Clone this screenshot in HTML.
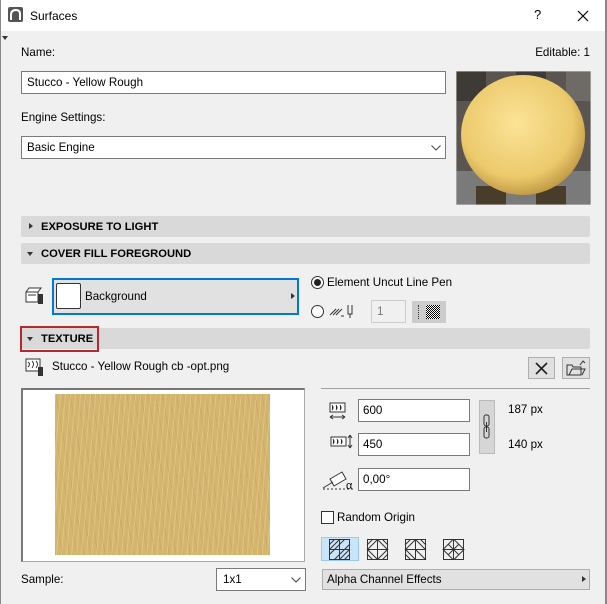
<!DOCTYPE html>
<html><head><meta charset="utf-8"><style>
*{box-sizing:border-box;margin:0;padding:0}
body{width:607px;height:604px;overflow:hidden;background:#f0f0f0;font-family:"Liberation Sans",sans-serif;font-size:11.6px;color:#000;position:relative}
.a{position:absolute}
.t{position:absolute;white-space:nowrap;line-height:14px}
.inp{position:absolute;background:#fff;border:1px solid #7a7a7a}
.bar{position:absolute;left:21px;width:569px;height:21px;background:#d9d9d9;border-radius:2px}
.bar span{position:absolute;left:20px;top:5px;font-weight:bold;font-size:11.2px}
.bar i{position:absolute;left:8px;top:7px;width:0;height:0}
.r{border-left:4px solid #333;border-top:3.5px solid transparent;border-bottom:3.5px solid transparent}
.d{border-top:4px solid #333;border-left:3.5px solid transparent;border-right:3.5px solid transparent;top:9px!important;left:6px!important}
</style></head><body>
<div class="a" style="left:0;top:0;width:607px;height:31px;background:#fff"></div>
<div class="a" style="left:0;top:0;width:1px;height:604px;background:#888"></div>
<div class="a" style="left:605px;top:0;width:2px;height:604px;background:#888"></div>
<svg class="a" style="left:8px;top:7px" width="15" height="15"><rect x="0" y="0" width="15" height="15" rx="2" fill="#555"/><path d="M3 13 V8 Q3 3 8 3 Q12 3 12 7 V13" stroke="#fff" stroke-width="2" fill="none"/></svg>
<div class="t" style="left:30px;top:9px;font-size:12px">Surfaces</div>
<div class="t" style="left:534px;top:8px;font-size:13px">?</div>
<svg class="a" style="left:577px;top:10px" width="12" height="12"><path d="M1 1L11 11M11 1L1 11" stroke="#000" stroke-width="1.2"/></svg>
<div class="a" style="left:2px;top:36px;border-top:4px solid #333;border-left:3px solid transparent;border-right:3px solid transparent"></div>

<div class="t" style="left:21px;top:46px">Name:</div>
<div class="t" style="right:17px;top:46px">Editable: 1</div>
<div class="inp" style="left:21px;top:71px;width:425px;height:23px"><div class="t" style="left:5px;top:4px">Stucco - Yellow Rough</div></div>
<div class="t" style="left:21px;top:111px">Engine Settings:</div>
<div class="inp" style="left:21px;top:136px;width:425px;height:23px"><div class="t" style="left:5px;top:4px">Basic Engine</div>
<svg class="a" style="left:409px;top:8px" width="10" height="6"><path d="M0.5 0.5L5 5L9.5 0.5" stroke="#444" fill="none"/></svg></div>
<svg class="a" style="left:456px;top:71px" width="135" height="134">
<defs><radialGradient id="g" cx="0.45" cy="0.4" r="0.6"><stop offset="0" stop-color="#fbe397"/><stop offset="0.75" stop-color="#ecca6c"/><stop offset="1" stop-color="#c49c48"/></radialGradient></defs>
<rect width="135" height="134" fill="#5a5550"/>
<rect x="0" y="0" width="30" height="30" fill="#3e3a35"/><rect x="60" y="0" width="30" height="30" fill="#3e3a35"/><rect x="110" y="0" width="25" height="30" fill="#6e6a66"/>
<rect x="0" y="100" width="135" height="34" fill="#7a7a7a"/>
<rect x="20" y="115" width="30" height="19" fill="#4a3c2a"/><rect x="80" y="115" width="30" height="19" fill="#4a3c2a"/>
<ellipse cx="67" cy="64" rx="62" ry="60" fill="url(#g)"/>
<rect x="0" y="0" width="135" height="134" fill="none" stroke="#ccc"/>
</svg>

<div class="bar" style="top:216px"><i class="r"></i><span>EXPOSURE TO LIGHT</span></div>
<div class="bar" style="top:243px"><i class="d"></i><span>COVER FILL FOREGROUND</span></div>

<svg class="a" style="left:25px;top:284px" width="20" height="22"><path d="M1 8h12v10H1z M1 8l3-4h12l-3 4 M3 11h8" stroke="#333" fill="#fff"/><rect x="13" y="10" width="5" height="10" fill="#333"/></svg>
<div class="a" style="left:52px;top:278px;width:247px;height:37px;background:#e1e1e1;border:2px solid #0078d7"></div>
<div class="a" style="left:56px;top:283px;width:25px;height:26px;background:#fff;border:1px solid #333;border-radius:2px"></div>
<div class="t" style="left:85px;top:290px">Background</div>
<div class="a" style="left:291px;top:293px;border-left:4px solid #333;border-top:3.5px solid transparent;border-bottom:3.5px solid transparent"></div>
<div class="a" style="left:311px;top:276px;width:13px;height:13px;border:1px solid #333;border-radius:50%;background:#fff"></div>
<div class="a" style="left:314px;top:279px;width:7px;height:7px;border-radius:50%;background:#222"></div>
<div class="t" style="left:327px;top:276px">Element Uncut Line Pen</div>
<div class="a" style="left:311px;top:305px;width:13px;height:13px;border:1px solid #333;border-radius:50%;background:#fff"></div>
<svg class="a" style="left:329px;top:303px" width="28" height="17"><path d="M1 12L7 6M4 12L10 6M7 12L13 6M12 13h3M19 2v9h4v-9M21 11v4" stroke="#333" fill="none"/></svg>
<div class="a" style="left:371px;top:300px;width:35px;height:23px;border:1px solid #ccc;background:#f0f0f0"><div class="t" style="left:5px;top:4px;color:#777">1</div></div>
<div class="a" style="left:412px;top:301px;width:34px;height:22px;background:#ccc"></div>
<div class="a" style="left:418px;top:305px;width:1px;height:14px;border-left:1px dotted #333"></div>
<div class="a" style="left:426px;top:305px;width:14px;height:14px;background:repeating-conic-gradient(#000 0 25%,#fff 0 50%) 0 0/2px 2px"></div>

<div class="bar" style="top:328px"><i class="d"></i><span>TEXTURE</span></div>
<div class="a" style="left:20px;top:326px;width:79px;height:26px;border:2px solid #b52a2a"></div>
<svg class="a" style="left:25px;top:357px" width="20" height="20"><rect x="1" y="2" width="14" height="12" fill="#fff" stroke="#333"/><path d="M3 5q3 2 0 5M7 4q3 3 0 7M11 4q3 3 0 7" stroke="#333" fill="none"/><rect x="13" y="10" width="5" height="9" fill="#333"/></svg>
<div class="t" style="left:52px;top:360px">Stucco - Yellow Rough cb -opt.png</div>
<div class="a" style="left:528px;top:357px;width:27px;height:22px;background:#e1e1e1;border:1px solid #adadad"></div>
<svg class="a" style="left:535px;top:362px" width="13" height="13"><path d="M1 1L12 12M12 1L1 12" stroke="#222" stroke-width="1.6"/></svg>
<div class="a" style="left:562px;top:357px;width:28px;height:22px;background:#e1e1e1;border:1px solid #adadad"></div>
<svg class="a" style="left:566px;top:359px" width="20" height="18"><path d="M1 6h5l1 2h8v8H1z M3 16l3-6h13l-3 6 M14 6l3-4 2 2" stroke="#333" fill="none"/></svg>

<div class="a" style="left:21px;top:388px;width:284px;height:174px;background:#fff;border:1px solid #aaa;border-top:2px solid #777;border-left:2px solid #777"></div>
<div class="a" style="left:55px;top:394px;width:215px;height:161px;background:#d4b56e;background-image:repeating-linear-gradient(95deg,rgba(255,240,190,.25) 0 1px,transparent 1px 5px),repeating-linear-gradient(80deg,rgba(150,115,50,.15) 0 1px,transparent 1px 7px)"></div>
<div class="t" style="left:21px;top:573px">Sample:</div>
<div class="inp" style="left:216px;top:568px;width:90px;height:23px"><div class="t" style="left:6px;top:4px">1x1</div>
<svg class="a" style="left:74px;top:8px" width="10" height="6"><path d="M0.5 0.5L5 5L9.5 0.5" stroke="#444" fill="none"/></svg></div>

<div class="a" style="left:321px;top:388px;width:269px;height:1px;background:#a0a0a0"></div>
<svg class="a" style="left:329px;top:402px" width="18" height="20"><rect x="1" y="1" width="15" height="9" fill="#fff" stroke="#333"/><path d="M3 3q2 3 0 5M7 3q2 3 0 5M11 3q2 3 0 5" stroke="#333"/><path d="M1 15h15M1 15l3-2M1 15l3 2M16 15l-3-2M16 15l-3 2" stroke="#333"/></svg>
<div class="inp" style="left:358px;top:399px;width:112px;height:23px"><div class="t" style="left:4px;top:4px">600</div></div>
<svg class="a" style="left:330px;top:434px" width="24" height="16"><rect x="1" y="3" width="15" height="9" fill="#fff" stroke="#333"/><path d="M3 5q2 3 0 5M7 5q2 3 0 5M11 5q2 3 0 5" stroke="#333"/><path d="M20 1v13M20 1l-2 3M20 1l2 3M20 14l-2-3M20 14l2-3" stroke="#333"/></svg>
<div class="inp" style="left:358px;top:433px;width:112px;height:23px"><div class="t" style="left:4px;top:4px">450</div></div>
<div class="a" style="left:479px;top:400px;width:16px;height:54px;background:#d6d6d6;border:1px solid #bbb"></div>
<svg class="a" style="left:482px;top:414px" width="10" height="26"><rect x="2" y="1" width="5" height="11" rx="2" fill="none" stroke="#333"/><rect x="2" y="13" width="5" height="11" rx="2" fill="none" stroke="#333"/><path d="M4.5 8v10" stroke="#333"/></svg>
<div class="t" style="left:508px;top:403px">187 px</div>
<div class="t" style="left:508px;top:438px">140 px</div>
<svg class="a" style="left:322px;top:467px" width="34" height="24"><path d="M8 12l12-7 4 7-12 7z" fill="#fff" stroke="#333"/><path d="M1 22h32" stroke="#333" stroke-dasharray="2 2"/><path d="M1 21l10-6" stroke="#333"/><text x="24" y="22" font-size="11" font-family="Liberation Sans">α</text></svg>
<div class="inp" style="left:358px;top:468px;width:112px;height:23px"><div class="t" style="left:4px;top:4px">0,00°</div></div>
<div class="a" style="left:321px;top:511px;width:13px;height:13px;border:1px solid #333;background:#fff"></div>
<div class="t" style="left:337px;top:511px">Random Origin</div>
<div class="a" style="left:321px;top:537px;width:38px;height:24px;background:#cce4f7;border:1px solid #99c9ef"></div>
<svg class="a" style="left:329px;top:539px" width="140" height="21">
<g fill="none" stroke="#333"><rect x="0.5" y="0.5" width="20" height="20"/><path d="M10.5 0v21M0 10.5h21M0 6l6-6M0 11l11-11M0 16l16-16M5 21l16-16M10 21l11-11M15 21l6-6"/></g>
<g transform="translate(38,0)" fill="none" stroke="#333"><rect x="0.5" y="0.5" width="20" height="20"/><path d="M10.5 0v21M0 10.5h21M0 6l6-6M0 11l11-11M10 0l11 11M15 0l6 6M0 15l6 6M0 10l11 11M10 21l11-11M15 21l6-6"/></g>
<g transform="translate(76,0)" fill="none" stroke="#333"><rect x="0.5" y="0.5" width="20" height="20"/><path d="M10.5 0v21M0 10.5h21M0 6l6-6M0 11l11-11M10 0l11 11M15 0l6 6M0 10l11 11M0 15l6 6M10 10l11 11"/></g>
<g transform="translate(114,0)" fill="none" stroke="#333"><rect x="0.5" y="0.5" width="20" height="20"/><path d="M10.5 0v21M0 10.5h21M10.5 0L0 10.5L10.5 21L21 10.5z M5 5l11 11M16 5L5 16"/></g>
</svg>
<div class="a" style="left:322px;top:569px;width:268px;height:21px;background:#e1e1e1;border:1px solid #adadad"><div class="t" style="left:4px;top:3px">Alpha Channel Effects</div>
<div class="a" style="left:259px;top:6px;border-left:4px solid #333;border-top:3.5px solid transparent;border-bottom:3.5px solid transparent"></div></div>
</body></html>
